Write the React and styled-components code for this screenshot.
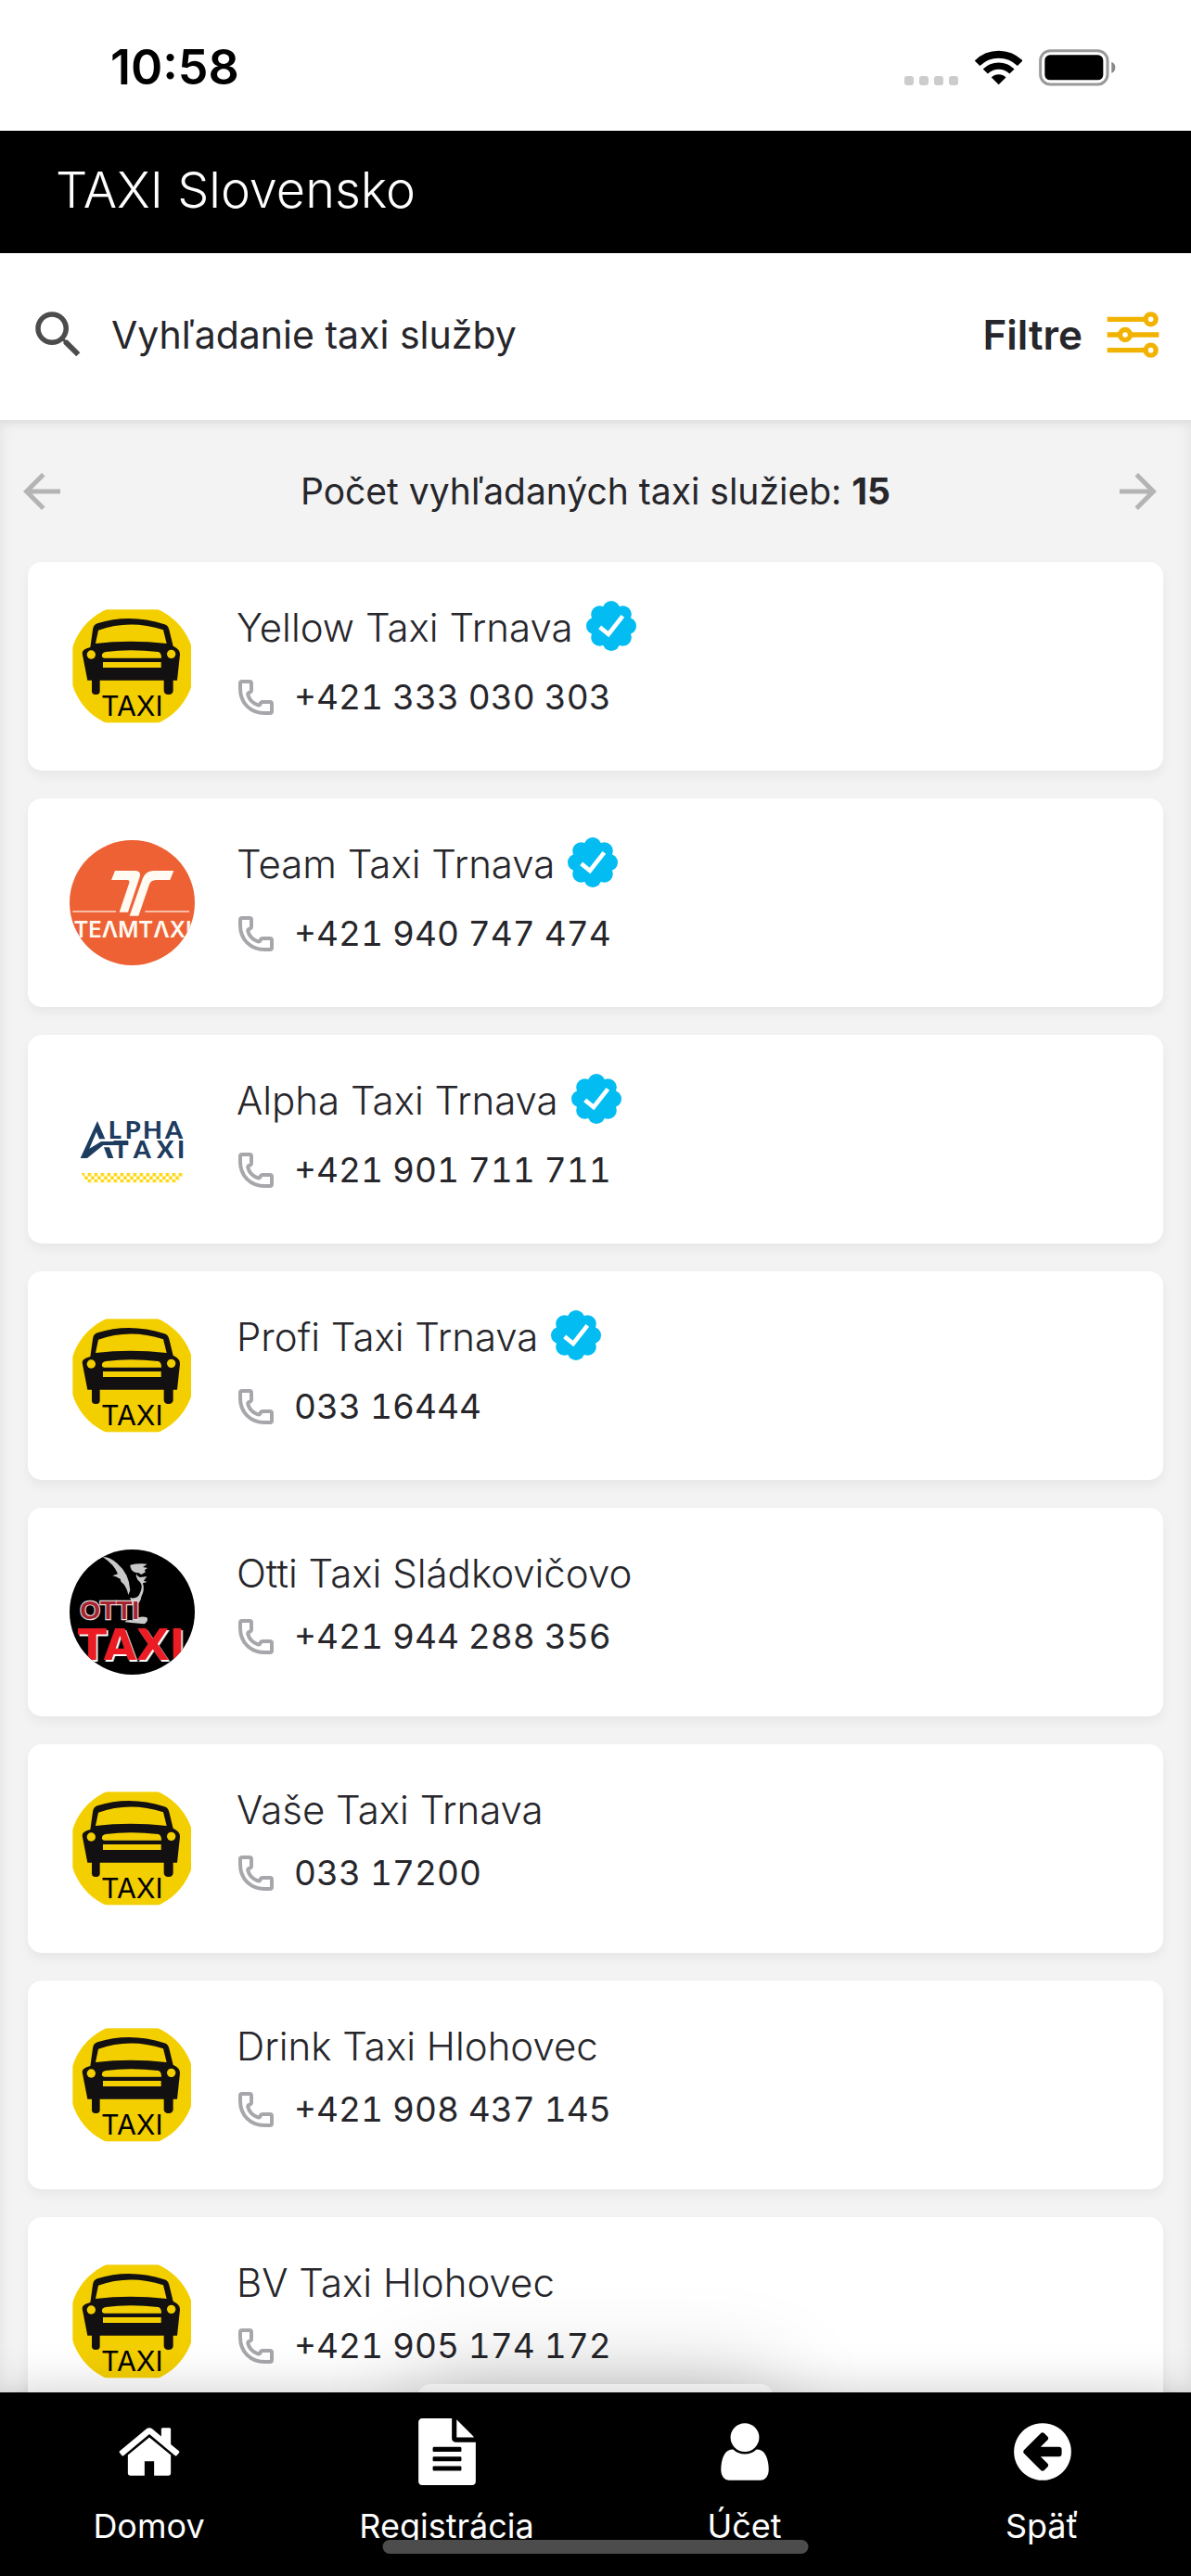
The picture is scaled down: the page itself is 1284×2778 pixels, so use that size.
import React, { useState } from 'react';
import styled, { createGlobalStyle } from 'styled-components';
import { MdArrowBack, MdArrowForward, MdSearch } from 'react-icons/md';

const GlobalStyle = createGlobalStyle`
  * {
    box-sizing: border-box;
  }

  body {
    margin: 0;
    background-color: #f3f3f3;
    color: #26262b;
    font-family: Inter, Roboto, sans-serif;
  }

  button {
    padding: 0;
    border: none;
    background: none;
    color: inherit;
    font-family: inherit;
    cursor: pointer;
  }

  a {
    color: inherit;
    text-decoration: none;
  }

  svg {
    display: block;
  }
`;

const Page = styled.div`
  display: flex;
  flex-direction: column;
  height: 100vh;
  overflow: hidden;
`;

const StatusBar = styled.div`
  display: flex;
  align-items: center;
  justify-content: space-between;
  flex-shrink: 0;
  height: 141px;
  padding: 5px 80px 0 119px;
  background-color: #fff;
  color: #000;
`;

const Clock = styled.span`
  font-size: 52px;
  line-height: 60px;
  font-weight: 600;
`;

const StatusIcons = styled.div`
  display: flex;
  align-items: center;
  gap: 18px;
`;

const Header = styled.header`
  display: flex;
  align-items: center;
  flex-shrink: 0;
  height: 132px;
  padding: 0 60px 4px;
  background-color: #000;
  color: #fff;
`;

const Title = styled.h1`
  margin: 0;
  font-size: 54px;
  line-height: 64px;
  font-weight: 300;
`;

const SearchBar = styled.form`
  position: relative;
  z-index: 1;
  display: flex;
  align-items: center;
  flex-shrink: 0;
  height: 180px;
  padding: 0 34px 4px 30px;
  background-color: #fff;
  box-shadow: 0 0 12px rgba(0, 0, 0, 0.08);
`;

const SearchLabel = styled.label`
  color: #4c4c4c;
`;

const SearchInput = styled.input`
  flex: 1;
  min-width: 0;
  height: 80px;
  margin: 0 24px;
  padding: 0;
  border: none;
  background: none;
  color: #26262b;
  font-family: inherit;
  font-size: 41px;

  &::placeholder {
    color: #26262b;
    opacity: 1;
  }

  &:focus {
    outline: none;
  }
`;

const FilterButton = styled.button`
  display: flex;
  align-items: center;
  gap: 26px;
  font-size: 44px;
  line-height: 48px;
  font-weight: 600;
`;

const Content = styled.main`
  position: relative;
  flex: 1;
  min-height: 0;
`;

const Results = styled.div`
  height: 100%;
  padding: 0 30px;
  overflow-y: auto;
  scrollbar-width: none;
  box-shadow: inset 0 0 16px rgba(0, 0, 0, 0.08);
`;

const Pager = styled.div`
  display: grid;
  grid-template-columns: 72px 1fr 72px;
  align-items: center;
  height: 153px;
  margin: 0 -15px;
`;

const PagerButton = styled.button`
  color: #b4b4b4;
`;

const ResultCount = styled.p`
  margin: 0;
  font-size: 39px;
  line-height: 48px;
  text-align: center;
`;

const TaxiList = styled.ul`
  display: flex;
  flex-direction: column;
  gap: 30px;
  margin: 0;
  padding: 0 0 30px;
  list-style: none;
`;

const TaxiCard = styled.li`
  display: flex;
  gap: 45px;
  height: 225px;
  padding: 42px 45px;
  border-radius: 15px;
  background-color: #fff;
  box-shadow: 0 6px 12px rgba(0, 0, 0, 0.05);
`;

const Logo = styled.svg`
  flex-shrink: 0;
  width: 135px;
  height: 135px;
  margin-top: 3px;
  border-radius: 50%;
`;

const RaisedWord = styled.text`
  filter: drop-shadow(5px 6px 0 #fff);
`;

const TaxiInfo = styled.div`
  display: flex;
  flex-direction: column;
  gap: 15px;
`;

const NameRow = styled.div`
  display: flex;
  align-items: flex-start;
  gap: 14px;
  height: ${(props) => (props.$verified ? '65px' : '58px')};
`;

const TaxiName = styled.h2`
  margin: 0;
  font-size: 42px;
  line-height: 58px;
  font-weight: 300;
`;

const PhoneLink = styled.a`
  display: flex;
  align-items: center;
  gap: 22px;
  padding-left: 2px;
  font-size: 37px;
  line-height: 48px;
  font-variant-numeric: tabular-nums;
`;

const Sheet = styled.div`
  position: absolute;
  bottom: -60px;
  left: 50%;
  width: 30%;
  height: 69px;
  transform: translateX(-50%);
  border-radius: 15px;
  background-color: #fff;
  box-shadow: 0 0 100px rgba(0, 0, 0, 0.25);
`;

const BottomNav = styled.nav`
  position: relative;
  z-index: 2;
  display: grid;
  grid-template-columns: repeat(4, 1fr);
  flex-shrink: 0;
  height: 198px;
  padding-top: 28px;
  background-color: #000;
  color: #fff;
  box-shadow: 0 0 50px rgba(0, 0, 0, 0.2);
`;

const NavItem = styled.a`
  display: flex;
  flex-direction: column;
  align-items: center;
  gap: 22px;
  font-size: 36px;
  line-height: 44px;
`;

const HomeIndicator = styled.div`
  position: absolute;
  bottom: 24px;
  left: 50%;
  width: 459px;
  height: 15px;
  transform: translateX(-50%);
  border-radius: 8px;
  background-color: #4c4c4c;
`;

const SignalIcon = () => (
  <svg width="58" height="38" viewBox="0 0 58 38" fill="#ccc">
    {[0, 16, 32, 48].map((x) => (
      <rect key={x} x={x} y="28" width="10" height="10" rx="3" />
    ))}
  </svg>
);

const WifiIcon = () => (
  <svg width="51" height="38" viewBox="451 100 151 114" fill="none" stroke="#000">
    <path d="M457.700 142.700A98 98 0 0 1 596.300 142.700" strokeWidth="24" />
    <path d="M484 169A61 61 0 0 1 570 169" strokeWidth="22" />
    <path d="M527 212L503.500 188.500A33 33 0 0 1 550.500 188.500Z" fill="#000" stroke="none" />
  </svg>
);

const BatteryIcon = () => (
  <svg width="84" height="40" viewBox="659 98 252 120">
    <rect x="664" y="103" width="217" height="109" rx="32" fill="none" stroke="#999" strokeWidth="9" />
    <rect x="678" y="117" width="189" height="81" rx="17" />
    <path d="M894 139Q906 143 906 157T894 175Z" fill="#888" />
  </svg>
);

const FilterIcon = () => (
  <svg width="57" height="50" viewBox="878 948 171 150" fill="none" stroke="#f2b200" strokeWidth="16">
    <path d="M880 973H1004M880 1023H921M955 1023H1047M880 1073H1004" />
    <circle cx="1021" cy="973" r="16.500" />
    <circle cx="938" cy="1023" r="16.500" />
    <circle cx="1021" cy="1073" r="16.500" />
  </svg>
);

const VerifiedIcon = () => (
  <svg width="54" height="54" viewBox="-81 -81 162 162" role="img" aria-label="Overené">
    <g fill="#02bcf2">
      <circle r="64" />
      {[0, 45, 90, 135, 180, 225, 270, 315].map((angle) => (
        <circle key={angle} cy="-53" r="28" transform={`rotate(${angle})`} />
      ))}
    </g>
    <path d="M-37 4L-9 27L37 -32" fill="none" stroke="#fff" strokeWidth="14" />
  </svg>
);

const PhoneIcon = () => (
  <svg width="38" height="38" viewBox="51 342 114 114" fill="none" stroke="#a6a6ab" strokeWidth="12">
    <path d="M63 348H87Q93 348 93 354V376Q93 381 88 383Q81 385 82 391Q88 415 114 424Q121 425 122 419Q124 414 130 414H153Q159 414 159 420V444Q159 450 153 450H136C90 450 57 417 57 371V354Q57 348 63 348Z" />
  </svg>
);

const NavIcon = ({ path }) => (
  <svg width="72" height="72" viewBox="0 0 1792 1792" fill="currentColor">
    <path d={path} />
  </svg>
);

const CarLogo = () => (
  <Logo viewBox="75 63 405 405" role="img" aria-label="Taxi">
    <rect x="85" y="82" width="383" height="366" fill="#f4cf00" />
    <g fill="#131011">
      <path d="M142 204L150 147Q152 131 165 127Q270 94 382 130Q394 134 397 147L410 200Q434 212 432 227L423 311H133L116 224Q115 210 142 204Z" />
      <rect x="147" y="295" width="26" height="62" rx="11" />
      <rect x="380" y="295" width="30" height="62" rx="13" />
    </g>
    <g fill="#f4cf00">
      <path d="M168 149Q270 113 378 148L389 192Q270 178 159 192Z" />
      <circle cx="145" cy="228" r="14" />
      <circle cx="404" cy="226" r="14" />
      <path d="M180 229Q181 221 192 219Q270 209 362 219Q372 221 372 239H186Q178 237 180 229Z" />
      <rect x="183" y="252" width="188" height="18" />
    </g>
    <text x="277" y="426" textAnchor="middle" fontFamily="Inter, sans-serif" fontSize="91" fontWeight="400">
      TAXI
    </text>
  </Logo>
);

const TeamLogo = () => (
  <Logo viewBox="75 78 405 405" role="img" aria-label="Team Taxi">
    <rect x="75" y="78" width="405" height="405" fill="#ed6134" />
    <g fill="#fffaf2">
      <path d="M222 177H290Q307 179 302 197L264 311H236L268 216Q270 208 262 207H210Z" />
      <path d="M345 177H412L400 207H354Q338 208 333 221L298 323H269L311 203Q321 178 345 177Z" />
      <path d="M85 307H225V311H85ZM319 307H462V311H319Z" opacity="0.8" />
      <text x="279" y="392" textAnchor="middle" fontFamily="Inter, sans-serif" fontSize="72" fontWeight="600">
        TEΛMTΛXI
      </text>
    </g>
  </Logo>
);

const AlphaLogo = () => (
  <Logo viewBox="75 33 405 405" role="img" aria-label="Alpha Taxi">
    <defs>
      <pattern id="checker" x="113" y="345" width="21" height="21" patternUnits="userSpaceOnUse">
        <path d="M0 0H10.500V10.500H0ZM10.500 10.500H21V21H10.500Z" fill="#ffd60a" />
      </pattern>
    </defs>
    <g fill="#1d3c60">
      <path d="M165 177L190 235H171L162 212L139 266L177 243H265V255H184L132 297H110Z" />
      <path d="M186 262H204L217 297H199Z" />
      <g fontFamily="Lato, sans-serif" fontSize="81" fontWeight="900">
        <text x="200" y="235">L</text>
        <text x="254" y="235">P</text>
        <text x="312" y="235">H</text>
        <text x="384" y="235">A</text>
        <text x="216" y="297">T</text>
        <text x="281" y="297">A</text>
        <text x="357" y="297">X</text>
        <text x="423" y="297">I</text>
      </g>
    </g>
    <path d="M113 345H448L425 376H131Z" fill="url(#checker)" />
  </Logo>
);

const OttiLogo = () => (
  <Logo viewBox="75 93 405 405" role="img" aria-label="Otti Taxi">
    <rect x="75" y="93" width="405" height="405" />
    <g fill="#c9c9c9">
      <path d="M182 117Q205 116 229 138Q268 171 271 225L265 240Q261 218 249 204Q238 196 240 189Q226 180 214 178L231 172Q220 142 182 117Z" />
      <path d="M271 143Q298 137 326 140L312 150L328 153Q313 159 321 166L307 174Q300 167 287 167Q271 160 271 143Z" />
      <path d="M292 167Q289 177 303 183L325 180L315 194L326 198L312 202Q319 224 307 246Q306 268 282 275L270 249Q294 254 301 238Q314 212 303 199Q286 185 292 167Z" />
      <path d="M283 322Q304 305 325 313Q332 322 318 334Q298 333 255 328Q256 318 283 322Z" />
    </g>
    <g fontWeight="700" paintOrder="stroke">
      <text x="109" y="318" fontFamily="Liberation Sans, sans-serif" fontSize="84" fill="#a52330" stroke="#e6dada" strokeWidth="7">
        OTTI
      </text>
      <RaisedWord
        x="275"
        y="449"
        textAnchor="middle"
        fontFamily="DejaVu Sans, sans-serif"
        fontSize="138"
        fill="#ec1c24"
      >
        TAXI
      </RaisedWord>
    </g>
  </Logo>
);

const logos = {
  car: CarLogo,
  team: TeamLogo,
  alpha: AlphaLogo,
  otti: OttiLogo,
};

const taxis = [
  { name: 'Yellow Taxi Trnava', phone: '+421 333 030 303', logo: 'car', verified: true },
  { name: 'Team Taxi Trnava', phone: '+421 940 747 474', logo: 'team', verified: true },
  { name: 'Alpha Taxi Trnava', phone: '+421 901 711 711', logo: 'alpha', verified: true },
  { name: 'Profi Taxi Trnava', phone: '033 16444', logo: 'car', verified: true },
  { name: 'Otti Taxi Sládkovičovo', phone: '+421 944 288 356', logo: 'otti' },
  { name: 'Vaše Taxi Trnava', phone: '033 17200', logo: 'car' },
  { name: 'Drink Taxi Hlohovec', phone: '+421 908 437 145', logo: 'car' },
  { name: 'BV Taxi Hlohovec', phone: '+421 905 174 172', logo: 'car' },
];

const navItems = [
  {
    label: 'Domov',
    href: '#domov',
    path: 'M1472 992v480q0 26-19 45t-45 19h-384v-384h-256v384h-384q-26 0-45-19t-19-45v-480q0-1 .5-3t.5-3l575-474 575 474q1 2 1 6zm223-69l-62 74q-8 9-21 11h-3q-13 0-21-7l-692-577-692 577q-12 8-24 7-13-2-21-11l-62-74q-8-10-7-23.500t11-21.500l719-599q32-26 76-26t76 26l244 204v-195q0-14 9-23t23-9h192q14 0 23 9t9 23v408l219 182q10 8 11 21.500t-7 23.500z',
  },
  {
    label: 'Registrácia',
    href: '#registracia',
    path: 'M1596 476q14 14 28 36h-472v-472q22 14 36 28zm-476 164h544v1056q0 40-28 68t-68 28h-1344q-40 0-68-28t-28-68v-1600q0-40 28-68t68-28h800v544q0 40 28 68t68 28zm160 736v-64q0-14-9-23t-23-9h-704q-14 0-23 9t-9 23v64q0 14 9 23t23 9h704q14 0 23-9t9-23zm0-256v-64q0-14-9-23t-23-9h-704q-14 0-23 9t-9 23v64q0 14 9 23t23 9h704q14 0 23-9t9-23zm0-256v-64q0-14-9-23t-23-9h-704q-14 0-23 9t-9 23v64q0 14 9 23t23 9h704q14 0 23-9t9-23z',
  },
  {
    label: 'Účet',
    href: '#ucet',
    path: 'M1536 1399q0 109-62.500 187t-150.500 78h-854q-88 0-150.500-78t-62.500-187q0-85 8.500-160.500t31.500-152 58.500-131 94-89 134.500-34.500q131 128 313 128t313-128q76 0 134.500 34.500t94 89 58.500 131 31.500 152 8.500 160.500zm-256-887q0 159-112.500 271.500t-271.500 112.500-271.500-112.500-112.500-271.500 112.500-271.500 271.500-112.500 271.500 112.500 112.500 271.500z',
  },
  {
    label: 'Späť',
    href: '#spat',
    path: 'M1408 960v-128q0-26-19-45t-45-19h-502l189-189q19-19 19-45t-19-45l-91-91q-18-18-45-18t-45 18l-362 362-91 91q-18 18-18 45t18 45l91 91 362 362q18 18 45 18t45-18l91-91q18-18 18-45t-18-45l-189-189h502q26 0 45-19t19-45zm256-64q0 209-103 385.500t-279.500 279.500-385.500 103-385.500-103-279.500-279.500-103-385.500 103-385.500 279.500-279.500 385.500-103 385.500 103 279.500 279.500 103 385.500z',
  },
];

const App = () => {
  const [query, setQuery] = useState('');

  const visibleTaxis = taxis.filter((taxi) =>
    taxi.name.toLowerCase().includes(query.toLowerCase())
  );

  return (
    <Page>
      <GlobalStyle />

      <StatusBar>
        <Clock>10:58</Clock>
        <StatusIcons>
          <SignalIcon />
          <WifiIcon />
          <BatteryIcon />
        </StatusIcons>
      </StatusBar>

      <Header>
        <Title>TAXI Slovensko</Title>
      </Header>

      <SearchBar onSubmit={(e) => e.preventDefault()}>
        <SearchLabel htmlFor="search" aria-label="Vyhľadanie taxi služby">
          <MdSearch size={66} />
        </SearchLabel>
        <SearchInput
          type="text"
          id="search"
          name="search"
          placeholder="Vyhľadanie taxi služby"
          value={query}
          onChange={(e) => setQuery(e.target.value)}
        />
        <FilterButton type="button">
          Filtre
          <FilterIcon />
        </FilterButton>
      </SearchBar>

      <Content>
        <Results>
          <Pager>
            <PagerButton type="button" aria-label="Predchádzajúce">
              <MdArrowBack size={60} />
            </PagerButton>
            <ResultCount>
              Počet vyhľadaných taxi služieb: <strong>15</strong>
            </ResultCount>
            <PagerButton type="button" aria-label="Ďalšie">
              <MdArrowForward size={60} />
            </PagerButton>
          </Pager>

          <TaxiList>
            {visibleTaxis.map((taxi) => {
              const TaxiLogo = logos[taxi.logo];
              return (
                <TaxiCard key={taxi.name}>
                  <TaxiLogo />
                  <TaxiInfo>
                    <NameRow $verified={taxi.verified}>
                      <TaxiName>{taxi.name}</TaxiName>
                      {taxi.verified && <VerifiedIcon />}
                    </NameRow>
                    <PhoneLink href={`tel:${taxi.phone.replace(/ /g, '')}`}>
                      <PhoneIcon />
                      {taxi.phone}
                    </PhoneLink>
                  </TaxiInfo>
                </TaxiCard>
              );
            })}
          </TaxiList>
        </Results>
        <Sheet />
      </Content>

      <BottomNav>
        {navItems.map((item) => (
          <NavItem key={item.label} href={item.href}>
            <NavIcon path={item.path} />
            {item.label}
          </NavItem>
        ))}
        <HomeIndicator />
      </BottomNav>
    </Page>
  );
};

export default App;
